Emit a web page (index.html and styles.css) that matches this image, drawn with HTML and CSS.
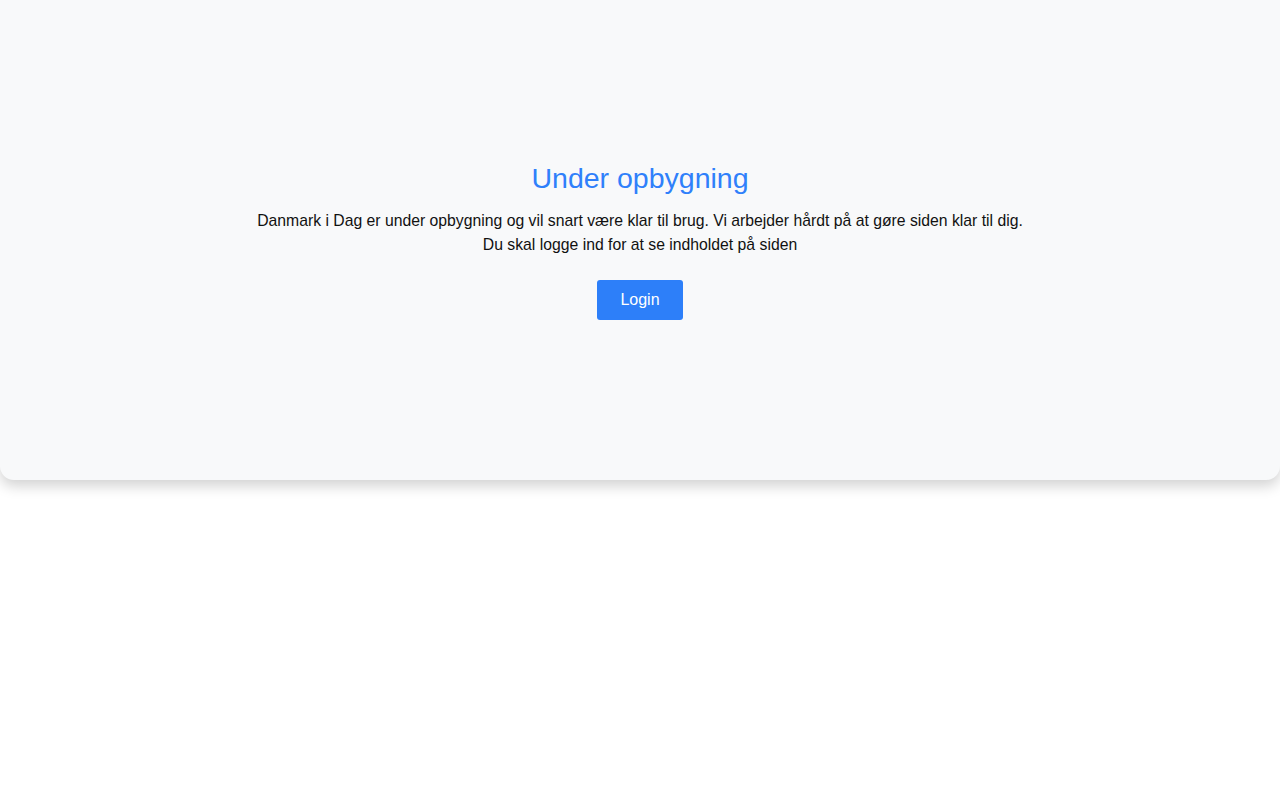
FILE: index.html
```html
<!DOCTYPE html>
<html lang="da">
<head>
    <meta charset="UTF-8">
    <meta name="viewport" content="width=device-width, initial-scale=1.0">
    <title>Danmark i Dag</title>
    <link rel="stylesheet" href="styles.css">
</head>
<body>
    <div class="hero">
        <div class="hero-content">
            <h1>Under opbygning</h1>
            <p>Danmark i Dag er under opbygning og vil snart være klar til brug. Vi arbejder hårdt på at gøre siden klar til dig.<br>
            Du skal logge ind for at se indholdet på siden</p>
            <button class="login-btn">Login</button>
        </div>
    </div>
</body>
</html>
```

FILE: styles.css
```css
body {
    font-family: "Liberation Sans", Arial, sans-serif;
    margin: 0;
    min-height: 100vh;
    background-color: #fff;
    color: #111;
}
.hero {
    height: 480px;
    background-color: #f8f9fa;
    border-radius: 0 0 14px 14px;
    box-shadow: 0 6px 14px rgba(0, 0, 0, 0.18);
    display: flex;
    align-items: center;
    justify-content: center;
    text-align: center;
}
h1 {
    font-size: 28.5px;
    font-weight: normal;
    color: #2f80fa;
    margin: 0 0 14px 0;
    line-height: 34px;
}
p {
    font-size: 15.75px;
    line-height: 24px;
    margin: 0 0 23px 0;
}
.login-btn {
    background-color: #2d7ff9;
    color: white;
    border: none;
    border-radius: 3px;
    font-family: inherit;
    font-size: 16px;
    width: 86px;
    height: 40px;
    cursor: pointer;
}
.login-btn:hover {
    background-color: #1f6fe6;
}
```
